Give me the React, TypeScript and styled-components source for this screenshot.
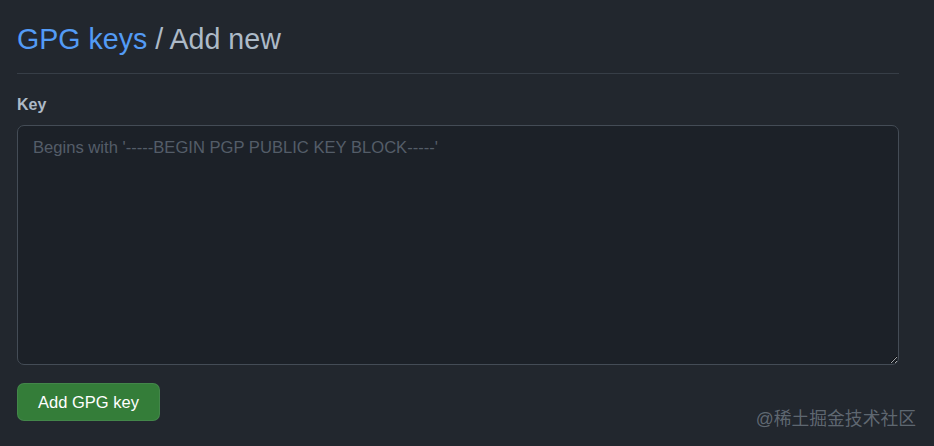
import React from "react";
import styled, { createGlobalStyle } from "styled-components";

const Global = createGlobalStyle`
  html, body { margin: 0; padding: 0; background: #22272e; }
  body { font-family: "Liberation Sans", Arial, sans-serif; }
`;

const Page = styled.div`
  width: 934px;
  height: 446px;
  box-sizing: border-box;
  padding: 20px 35px 0 17px;
  background: #22272e;
  position: relative;
  overflow: hidden;
`;

const Header = styled.div`
  padding-bottom: 15px;
  border-bottom: 1px solid #373e47;
  display: flex;
  align-items: baseline;
`;

const Title = styled.h1`
  margin: 0;
  font-size: 28.6px;
  font-weight: 400;
  line-height: 38px;
  color: #adbac7;
`;

const Crumb = styled.a`
  color: #539bf5;
  text-decoration: none;
`;

const Label = styled.label`
  display: block;
  margin-top: 20px;
  font-size: 16px;
  font-weight: 700;
  color: #adbac7;
  line-height: 22px;
`;

const Area = styled.textarea`
  display: block;
  box-sizing: border-box;
  width: 100%;
  height: 240px;
  margin-top: 9px;
  padding: 11px 15px;
  background: #1c2128;
  border: 1px solid #444c56;
  border-radius: 7px;
  color: #adbac7;
  font-family: "Liberation Sans", Arial, sans-serif;
  font-size: 16.6px;
  line-height: 22px;
  resize: vertical;
  outline: none;
  &::placeholder { color: #545d68; }
`;

const Button = styled.button`
  margin-top: 18px;
  height: 38px;
  padding: 0 20px;
  background: #347d39;
  border: 1px solid rgba(205, 217, 229, 0.1);
  border-radius: 7px;
  color: #ffffff;
  font-family: "Liberation Sans", Arial, sans-serif;
  font-size: 16.5px;
  font-weight: 400;
  cursor: pointer;
`;

const Watermark = styled.div`
  position: absolute;
  right: 18px;
  bottom: 16px;
  font-family: "Liberation Sans", "Noto Sans CJK SC", sans-serif;
  font-size: 17.8px;
  color: rgba(173, 186, 199, 0.45);
`;

export default function App() {
  return (
    <>
      <Global />
      <Page>
        <Header>
          <Title>
            <Crumb href="#">GPG keys</Crumb> / Add new
          </Title>
        </Header>
        <Label htmlFor="key">Key</Label>
        <Area id="key" placeholder="Begins with '-----BEGIN PGP PUBLIC KEY BLOCK-----'" />
        <Button>Add GPG key</Button>
        <Watermark>@稀土掘金技术社区</Watermark>
      </Page>
    </>
  );
}
